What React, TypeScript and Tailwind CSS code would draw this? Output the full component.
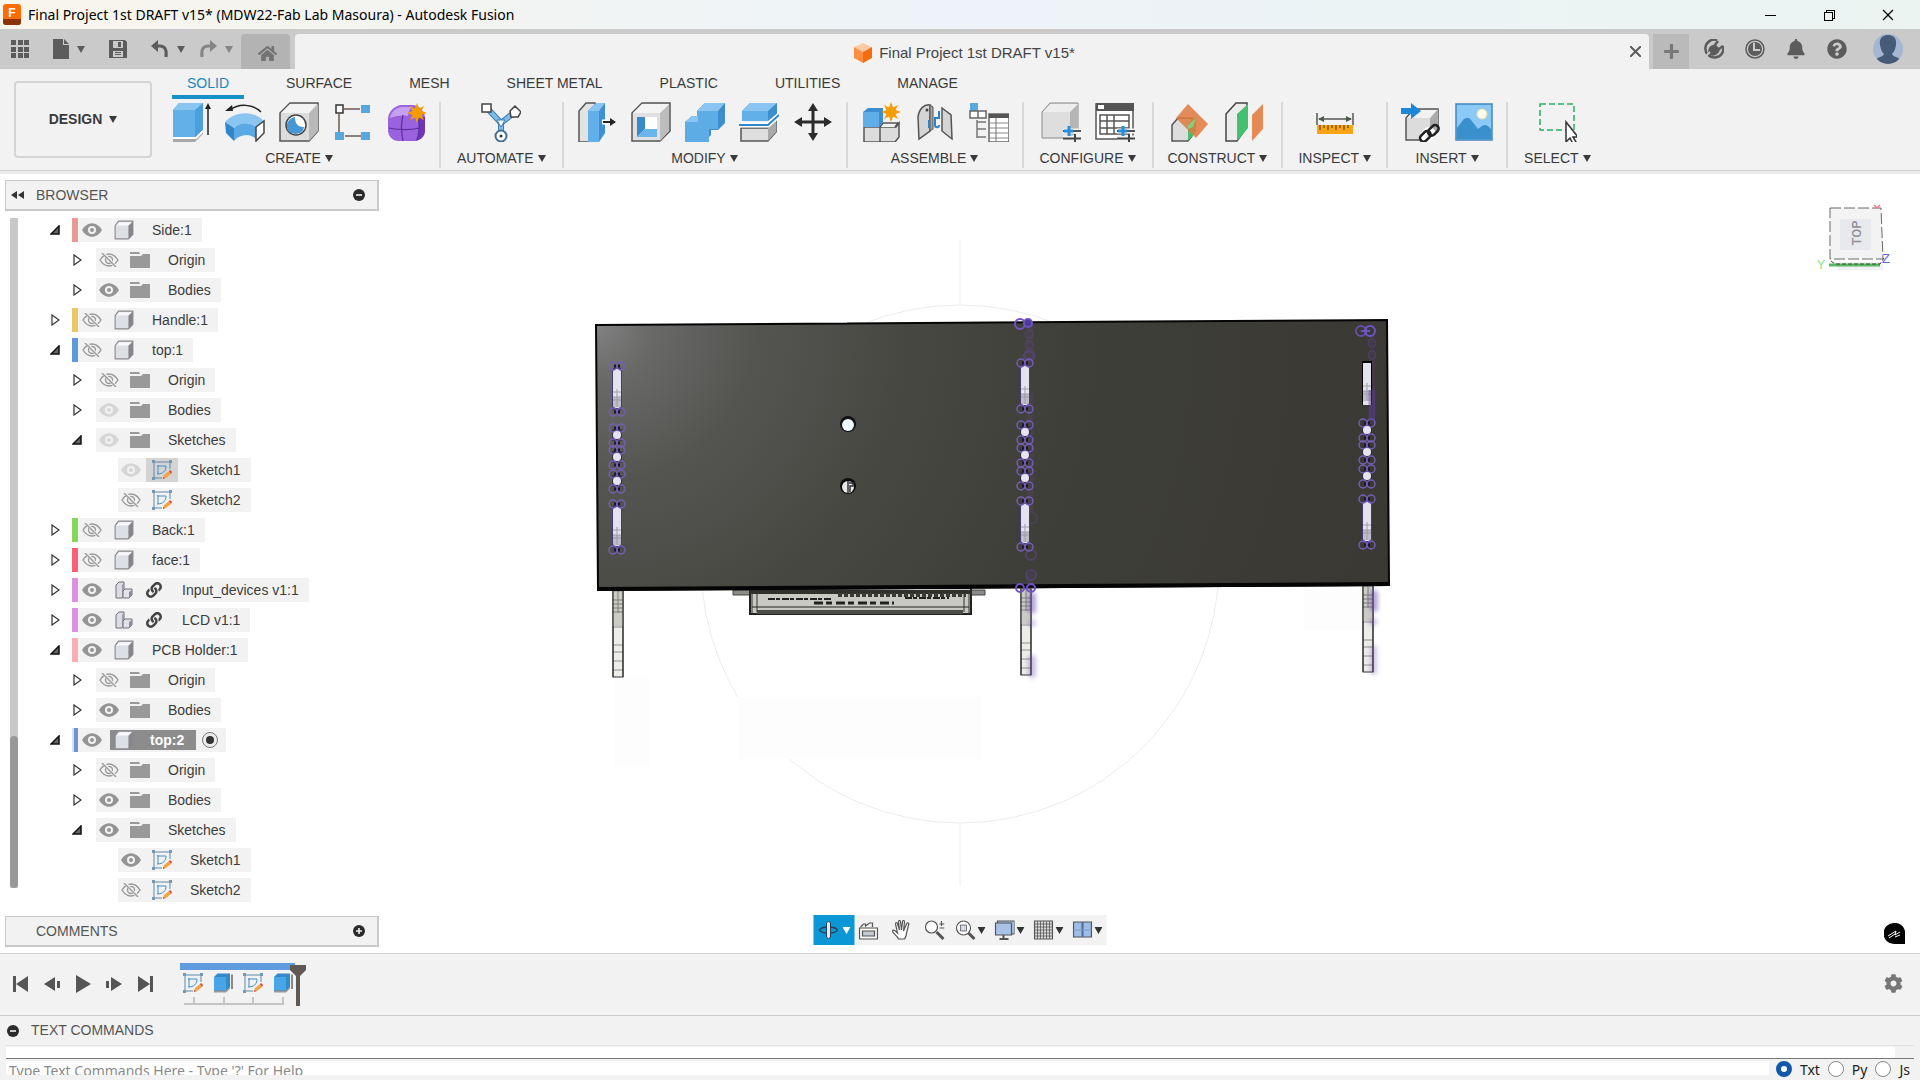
import type { ReactNode } from "react";
import {
  FaBell,
  FaCog,
  FaHome,
  FaLink,
  FaPlus,
  FaQuestionCircle,
} from "react-icons/fa";
import { VscChromeClose, VscChromeMinimize, VscChromeRestore } from "react-icons/vsc";

type IconProps = { className?: string };

const Caret = ({ className = "" }: IconProps) => (
  <svg viewBox="0 0 8 7" className={`h-[7px] w-2 shrink-0 fill-current ${className}`}>
    <path d="M0 0h8L4 7z" />
  </svg>
);

const Svg = ({ children, className = "size-10" }: { children: ReactNode; className?: string }) => (
  <svg viewBox="0 0 40 40" fill="none" className={`shrink-0 ${className}`}>
    {children}
  </svg>
);

/* ---------- ribbon icons ---------- */

const Star = ({ x, y }: { x: number; y: number }) => (
  <path
    transform={`translate(${x} ${y})`}
    fill="#f59c00"
    d="M0-10l2 5.500 5-2.500-2.500 5L10 0 4.500 2 7 7 2 4.500 0 10-2 4.500-7 7-4.500 2-10 0-4.500-2-7-7-2-4.500z"
  />
);

const Extrude = () => (
  <Svg>
    <path d="M2 36l6-6h18l6-6v8l-8 8H2z" fill="#a9a9a9" />
    <path d="M2 8l6-7h24v27l-7 7H2z" fill="#4c9fdd" />
    <path d="M2 8h22v27H2z" fill="#63b0e8" />
    <path d="M2 8l6-7h24l-8 7z" fill="#8ac5f2" />
    <path d="M2 36h23l7-7" stroke="#fff" strokeWidth="2" />
    <path d="M37 33V4" stroke="#222" strokeWidth="1.500" />
    <path d="M34 7l3-6 3 6z" fill="#222" />
  </Svg>
);

const Revolve = () => (
  <Svg>
    <path d="M0 20C10 9 28 8 39 19l-8 6C26 20 15 20 9 26z" fill="#8ac5f2" />
    <path d="M0 20l9 6v13L1 31z" fill="#2f86c9" />
    <path d="M9 26c6-6 16-6 22-1v12c-6-6-16-5-22 2z" fill="#5aa9e4" />
    <path d="M31 25l8-6v12l-8 8z" fill="#fff" stroke="#444" strokeWidth="1.500" />
    <path d="M5 8C14 1 28 2 36 10" stroke="#222" strokeWidth="1.500" />
    <path d="M0 9l7-6 1 6z" fill="#222" />
  </Svg>
);

const Hole = () => (
  <Svg>
    <path d="M1 11L11 1h28v28L30 39H1z" fill="#dcdcdc" stroke="#555" strokeWidth="1.500" />
    <path d="M30 11l9-9v27l-9 10z" fill="#b9b9b9" />
    <path d="M2 11L11 2h27l-8 9z" fill="#f3f3f3" />
    <circle cx="17" cy="23" r="10" fill="#fff" stroke="#444" strokeWidth="1.500" />
    <path d="M16 15c0 8 4 10 9 10-1 9-15 9-17 1-1-6 3-10 8-11z" fill="#4797d6" />
  </Svg>
);

const Pattern = () => (
  <Svg>
    <path d="M11 7h16M6 12v18M12 34h16" stroke="#6e5a50" strokeWidth="1.500" />
    <path d="M3 3h7v8H3z" fill="#fff" stroke="#333" strokeWidth="1.500" />
    <path d="M28 3h9v8h-9zM2 30h9v8H2zM28 30h9v8h-9z" fill="#58a8e0" />
  </Svg>
);

const Form = () => (
  <Svg>
    <path d="M1 17C1 10 7 4 14 3h12c7 1 12 7 12 13v12c0 7-5 11-11 11H12C5 39 1 34 1 28z" fill="#9a63dd" />
    <path d="M32 15h6v13c0 7-5 10-10 11 4-4 4-8 4-11z" fill="#6d36b4" />
    <path d="M3 16C4 10 9 5 15 5h10c-3 3-4 6-4 9-6-1-13 0-18 2z" fill="#c6a1f2" />
    <path d="M16 13c-2 8-2 17 0 26M2 26c9 2 22 2 31 0M31 15c2 7 1 16-1 23" stroke="#5d2d9d" strokeWidth="1.200" />
    <Star x={30} y={11} />
  </Svg>
);

const Automate = () => (
  <Svg>
    <path d="M6 6l14 15v12M34 10L20 21" stroke="#3e7fae" strokeWidth="6" strokeLinecap="round" />
    <path d="M6 6l14 15v12M34 10L20 21" stroke="#7dbbe8" strokeWidth="4" strokeLinecap="round" />
    <path d="M16 18l4 7 4-7z" fill="#fff" stroke="#3e7fae" />
    <path d="M1 2h9v8H1zM29 9l5-5 6 6-3 5h-7z" fill="#fff" stroke="#444" strokeWidth="1.500" />
    <circle cx="20" cy="34" r="5.500" fill="#fff" stroke="#3e6f96" strokeWidth="2" />
    <circle cx="20" cy="34" r="1.500" fill="#333" />
  </Svg>
);

const PressPull = () => (
  <Svg>
    <path d="M2 9l7-8h9v9l-6 30H2z" fill="#e2e2e2" stroke="#555" strokeWidth="1.500" />
    <path d="M11 9l8-8h9v30l-6 9H11z" fill="#3f90d2" />
    <path d="M11 9h11v31H11z" fill="#62b0e9" />
    <path d="M11 9l8-8h9l-6 8z" fill="#8ac5f2" />
    <path d="M25 20h10" stroke="#fff" strokeWidth="5" />
    <path d="M26 20h9" stroke="#222" strokeWidth="2" />
    <path d="M33 16l6 4-6 4z" fill="#222" />
  </Svg>
);

const Shell = () => (
  <Svg>
    <path d="M1 11L11 1h28v28L29 39H1z" fill="#e0e0e0" stroke="#555" strokeWidth="1.500" />
    <path d="M29 11l9-9v27l-9 10z" fill="#bdbdbd" />
    <path d="M2 11L11 2h27l-9 9z" fill="#f4f4f4" />
    <path d="M6 15h20v20H6z" fill="#fff" />
    <path d="M6 15h8v12l-8 8z" fill="#3789c9" />
    <path d="M6 35l8-8h12v8z" fill="#6cb5ea" />
  </Svg>
);

const Combine = () => (
  <Svg>
    <path d="M12 9l8-8h20v20l-7 7h-7v5l-7 7H0V20l7-6h5z" fill="#3c8ecf" />
    <path d="M12 9h21v18H24v13H0V19h12z" fill="#5dace6" />
    <path d="M12 9l8-8h20l-7 8zM0 20l7-6h6v6z" fill="#8ac5f2" />
  </Svg>
);

const SplitBody = () => (
  <Svg>
    <path d="M2 26h27l8-8v12l-8 9H2z" fill="#dedede" stroke="#555" strokeWidth="1.500" />
    <path d="M29 26l8-8v12l-8 9z" fill="#aaa" />
    <path d="M3 9l8-8h27v11l-9 7H3z" fill="#3c8ecf" />
    <path d="M3 9h26v10H3z" fill="#62b0e9" />
    <path d="M3 9l8-8h27l-9 8z" fill="#8ac5f2" />
    <path d="M0 23h29L40 13" stroke="#fff" strokeWidth="5" />
    <path d="M0 23h29L40 13" stroke="#2f86c9" strokeWidth="2" />
  </Svg>
);

const Move = () => (
  <Svg>
    <path d="M20 6v28M6 20h28" stroke="#2b2b2b" strokeWidth="3" />
    <path d="M20 1l5 8H15zM20 39l5-8H15zM1 20l8-5v10zM39 20l-8-5v10z" fill="#2b2b2b" />
  </Svg>
);

const NewComponent = () => (
  <Svg>
    <path d="M3 25h32l3-4v14l-4 5H3z" fill="#dcdcdc" stroke="#555" strokeWidth="1.500" />
    <path d="M19 25v15M19 25l3-4h15l-3 4" stroke="#555" strokeWidth="1.500" fill="#f2f2f2" />
    <path d="M2 10l5-4h15v14l-4 5H2z" fill="#3c8ecf" />
    <path d="M2 10h16v15H2z" fill="#60aee8" />
    <Star x={30} y={10} />
  </Svg>
);

const Joint = () => (
  <Svg>
    <path d="M3 15C4 7 9 2 15 3v26L4 37z" fill="#d5d5d5" stroke="#555" strokeWidth="1.500" />
    <path d="M15 3l3 2v22l-3 2z" fill="#a5a5a5" stroke="#555" />
    <path d="M27 6l9 7 1 24-10-8z" fill="#d5d5d5" stroke="#555" strokeWidth="1.500" />
    <path d="M14 18v8M24 9v8M24 16h-4v7c0 3 4 3 4 0" stroke="#2c83c5" strokeWidth="2" />
    <circle cx="12" cy="8" r="1.500" fill="#444" />
  </Svg>
);

const AsBuilt = () => (
  <Svg>
    <path d="M1 1h8v8H1z" fill="#58a8e0" />
    <path d="M1 9h8v7H1zM9 9h8v7H9z" fill="#fff" stroke="#666" strokeWidth="1.500" />
    <path d="M8 18v18M8 20h9M8 27h9M8 35h9" stroke="#777" strokeWidth="1.500" />
    <path d="M20 12h20v28H20z" fill="#fff" stroke="#666" strokeWidth="1.500" />
    <path d="M20 12h20v4H20z" fill="#555" />
    <path d="M20 21h20M20 26h20M20 31h20M20 36h20M27 16v24" stroke="#888" strokeWidth="1.200" />
  </Svg>
);

const Sliders = () => (
  <>
    <path d="M22 29h18M22 36h18" stroke="#f2f2f2" strokeWidth="5" />
    <path d="M22 29h18" stroke="#222" strokeWidth="1.500" />
    <path d="M22 36.500h18M34 32v9" stroke="#444" strokeWidth="2" />
    <path d="M23 29h9M28 24v10" stroke="#2a8fda" strokeWidth="3" />
  </>
);

const Configure = () => (
  <Svg>
    <path d="M1 10l8-9h28v26l-8 9H1z" fill="#dedede" stroke="#888" />
    <path d="M29 10l8-9v26l-8 9z" fill="#b5b5b5" />
    <path d="M2 10l8-8h27l-8 8z" fill="#ededed" />
    <Sliders />
  </Svg>
);

const ConfigTable = () => (
  <Svg>
    <path d="M1 2h37v35H1z" fill="#fff" stroke="#555" strokeWidth="1.500" />
    <path d="M1 1h38v8H1z" fill="#555" />
    <path d="M3 3h6v4H3z" fill="#fff" />
    <path d="M5 13h29v19H5zM5 19h29M5 26h29M12 13v19M19 13v19" stroke="#555" strokeWidth="1.500" />
    <Sliders />
  </Svg>
);

const OffsetPlane = () => (
  <Svg>
    <path d="M2 23l6-7h14v18l-4 5H2z" fill="#ddd" stroke="#555" strokeWidth="1.500" />
    <path d="M18 22l8-8v16l-8 9z" fill="#45c070" />
    <path d="M18 2l20 20-12 14L6 16z" fill="#e07a3e" opacity=".85" />
    <path d="M18 23l8-7-3 9-5 2z" fill="#8ecb78" />
  </Svg>
);

const Midplane = () => (
  <Svg>
    <path d="M2 12L12 1h11v24L13 39H2z" fill="#ececec" stroke="#444" strokeWidth="1.500" />
    <path d="M13 12L24 2v24L13 39z" fill="#45c070" />
    <path d="M28 13L39 2v25L28 39z" fill="#e58955" />
  </Svg>
);

const Measure = () => (
  <Svg>
    <path d="M2 11v12M38 11v12M4 17h32" stroke="#555" strokeWidth="1.500" />
    <path d="M3 17l6-3v6zM37 17l-6-3v6z" fill="#4c5a4c" />
    <path d="M2 23h36v9H2z" fill="#f7a516" />
    <path d="M5 23v5M9 23v3M13 23v5M17 23v3M21 23v5M25 23v3M29 23v5M33 23v3" stroke="#6b4a10" strokeWidth="1.200" />
  </Svg>
);

const InsertLink = () => (
  <Svg>
    <path d="M6 16l8-9h24v22l-8 9H6z" fill="#dcdcdc" stroke="#555" strokeWidth="1.500" />
    <path d="M30 16l8-9v22l-8 9z" fill="#ababab" />
    <path d="M7 16l8-8h22l-7 8z" fill="#f2f2f2" />
    <path d="M1 6h10V1l10 8-10 8v-5H1z" fill="#1e86d8" />
    <g stroke="#fff" strokeWidth="6">
      <rect x="22" y="30" width="11" height="7" rx="3.500" transform="rotate(-45 27 33)" />
    </g>
    <g stroke="#222" strokeWidth="2.600">
      <rect x="19" y="31" width="12" height="7" rx="3.500" transform="rotate(-45 25 34)" />
      <rect x="27" y="25" width="12" height="7" rx="3.500" transform="rotate(-45 33 28)" />
    </g>
  </Svg>
);

const InsertImage = () => (
  <Svg>
    <path d="M2 2h36v36H2z" fill="#8bcaf7" stroke="#3f86bd" strokeWidth="1.500" />
    <path d="M3 26l6-8c3-3 6-3 8 0l7 9 4-3c3-2 5-1 7 1l2 2v10H3z" fill="#3a8fcd" />
    <circle cx="28" cy="12" r="5" fill="#fffbe6" stroke="#e8e2a8" />
  </Svg>
);

const Select = () => (
  <Svg>
    <path d="M3 2h34v26H3z" stroke="#2bae66" strokeWidth="1.500" strokeDasharray="6 3" />
    <path d="M29 20v20l4-4 3 6 3-2-3-5h5z" fill="#fff" stroke="#333" strokeWidth="1.500" />
  </Svg>
);

const ribbonGroups = [
  { label: "CREATE", pad: "px-3", icons: [Extrude, Revolve, Hole, Pattern, Form] },
  { label: "AUTOMATE", pad: "px-4", icons: [Automate] },
  { label: "MODIFY", pad: "px-[13px]", icons: [PressPull, Shell, Combine, SplitBody, Move] },
  { label: "ASSEMBLE", pad: "px-[13px]", icons: [NewComponent, Joint, AsBuilt] },
  { label: "CONFIGURE", pad: "px-4", icons: [Configure, ConfigTable] },
  { label: "CONSTRUCT", pad: "px-[14px]", icons: [OffsetPlane, Midplane] },
  { label: "INSPECT", pad: "px-[15px]", icons: [Measure] },
  { label: "INSERT", pad: "px-3", icons: [InsertLink, InsertImage] },
  { label: "SELECT", pad: "px-4", icons: [Select] },
];

const workspaceTabs = ["SOLID", "SURFACE", "MESH", "SHEET METAL", "PLASTIC", "UTILITIES", "MANAGE"];

/* ---------- top bars ---------- */

const TitleBar = () => (
  <header className="flex h-[29px] shrink-0 items-center bg-linear-to-r from-[#f8f5ec] via-[#edf3f8] to-[#ebf4f1] pr-[3px] pl-[3px] text-black">
    <svg viewBox="0 0 18 21" className="h-[21px] w-[18px]">
      <rect width="18" height="21" rx="3" fill="#ff6b00" />
      <path d="M0 15h18v3a3 3 0 0 1-3 3H3a3 3 0 0 1-3-3z" fill="#8a3208" />
      <text x="9" y="13" textAnchor="middle" fontSize="12" fontWeight="700" fill="#fff" fontFamily="Liberation Sans, sans-serif">
        F
      </text>
    </svg>
    <h1 className="ml-[7px] flex-1 font-['Noto_Sans',sans-serif] text-[14px] leading-5">
      Final Project 1st DRAFT v15* (MDW22-Fab Lab Masoura) - Autodesk Fusion
    </h1>
    <div className="flex">
      {[VscChromeMinimize, VscChromeRestore, VscChromeClose].map((Icon, i) => (
        <button key={i} aria-label={["Minimize", "Restore", "Close"][i]} className="flex w-[59px] justify-center">
          <Icon size={16} />
        </button>
      ))}
    </div>
  </header>
);

const QuickAccess = () => (
  <div className="flex h-10 shrink-0 items-end bg-[#cacaca] text-[#5c5c5c]">
    <div className="flex h-[35px] w-[241px] items-start pt-[5px]">
      <button aria-label="Data panel" className="ml-[11px] pt-px">
        <svg viewBox="0 0 18 18" className="size-[18px] fill-current">
          <path d="M0 0h5v5H0zM7 0h5v5H7zM13 0h5v5h-5zM0 7h5v5H0zM7 7h5v5H7zM13 7h5v5h-5zM0 13h5v5H0zM7 13h5v5H7zM13 13h5v5h-5z" />
        </svg>
      </button>
      <button aria-label="File" className="ml-6 flex items-center gap-2">
        <svg viewBox="0 0 16 20" className="h-5 w-4 fill-current">
          <path d="M0 0h10v6h6v14H0zM11 0l5 5h-5z" />
        </svg>
        <Caret />
      </button>
      <button aria-label="Save" className="ml-6 pt-px">
        <svg viewBox="0 0 18 18" className="size-[18px]">
          <path d="M0 0h16l2 2v16H0z" fill="#5c5c5c" />
          <path d="M4 1h10v7H4zM4 11h10v6H4z" fill="#cacaca" />
          <path d="M9 2h3v5H9zM6 12h6v1H6zM6 14h6v1H6z" fill="#5c5c5c" />
        </svg>
      </button>
      <button aria-label="Undo" className="ml-6 flex items-center gap-2 pt-px">
        <svg viewBox="0 0 18 18" fill="none" className="size-[18px]">
          <path d="M4 6h5c5 0 7 4 6 11" stroke="currentColor" strokeWidth="3" />
          <path d="M0 6l7-6v12z" fill="currentColor" />
        </svg>
        <Caret />
      </button>
      <button aria-label="Redo" className="ml-[14px] flex items-center gap-2 pt-px text-[#858585]">
        <svg viewBox="0 0 18 18" fill="none" className="size-[18px]">
          <path d="M14 6H9C4 6 2 10 3 17" stroke="currentColor" strokeWidth="3" />
          <path d="M18 6l-7-6v12z" fill="currentColor" />
        </svg>
        <Caret />
      </button>
    </div>
    <button aria-label="Home" className="flex h-[35px] w-[49px] items-center justify-center rounded-t bg-[#b3b3b3] pt-1 pl-1 text-[#737373]">
      <FaHome size={19} />
    </button>
    <div className="ml-[5px] flex h-[35px] flex-1 items-center rounded-t bg-[#f2f2f2] pr-2">
      <div className="flex flex-1 items-center justify-center gap-[7px] pt-[2px] pl-1">
        <svg viewBox="0 0 18 20" className="h-5 w-[18px]">
          <path d="M9 0l9 4-9 5-9-5z" fill="#ffc9a3" />
          <path d="M0 4l9 5v11l-9-5z" fill="#ff8d42" />
          <path d="M18 4L9 9v11l9-5z" fill="#f36c0e" />
        </svg>
        <span className="text-[15px] leading-5 text-[#444]">Final Project 1st DRAFT v15*</span>
      </div>
      <button aria-label="Close tab" className="text-[#5c5c5c]">
        <svg viewBox="0 0 11 11" className="size-[11px] stroke-current" strokeWidth="2">
          <path d="M0 0l11 11M11 0L0 11" />
        </svg>
      </button>
    </div>
    <button aria-label="New tab" className="ml-1 flex h-[35px] w-9 items-center justify-center bg-[#bababa] text-[#777]">
      <FaPlus size={17} />
    </button>
    <div className="flex h-[35px] items-start gap-[21px] pt-[5px] pr-[17px] pl-[15px]">
      <button aria-label="Extensions">
        <svg viewBox="0 0 20 20" className="size-5">
          <path d="M13 1a9 9 0 1 0 6 6" fill="none" stroke="#5c5c5c" strokeWidth="2.500" />
          <path d="M5 16c-2-5 0-9 4-10l2-1 5 5-1 3c-2 3-6 5-10 3z" fill="#5c5c5c" />
          <path d="M11 6l3-4M15 10l4-3" stroke="#5c5c5c" strokeWidth="2.500" />
          <path d="M1 18l5-5" stroke="#cacaca" strokeWidth="2" />
        </svg>
      </button>
      <button aria-label="Job status">
        <svg viewBox="0 0 20 20" className="size-5">
          <circle cx="10" cy="10" r="9" fill="none" stroke="#5c5c5c" strokeWidth="1.500" />
          <circle cx="10" cy="10" r="7" fill="#5c5c5c" />
          <path d="M9 4v7h6" fill="none" stroke="#cacaca" strokeWidth="2" />
        </svg>
      </button>
      <button aria-label="Notifications" className="flex w-5 justify-center">
        <FaBell size={20} />
      </button>
      <button aria-label="Help">
        <FaQuestionCircle size={20} />
      </button>
      <button aria-label="Account" className="-mt-[5px] ml-[5px]">
        <svg viewBox="0 0 30 30" className="size-[30px]">
          <clipPath id="avatar">
            <circle cx="15" cy="15" r="15" />
          </clipPath>
          <g clipPath="url(#avatar)">
            <path d="M0 0h30v30H0z" fill="#a4b7d2" />
            <path d="M15 1c6 0 9 4 8 10-1 5-2 7-4 9 1 3 6 3 9 6v4H2v-4c3-3 8-3 9-6-2-2-3-4-4-9C6 5 9 1 15 1z" fill="#455b78" />
          </g>
        </svg>
      </button>
    </div>
  </div>
);

const Ribbon = () => (
  <div className="flex h-[105px] shrink-0 border-b-[3px] border-[#eaeaea] bg-[#f2f2f2] text-[14px] text-[#3a3a3a] shadow-[inset_0_-1px_0_#cfcfcf]">
    <button className="mt-3 ml-[14px] flex h-[77px] w-[138px] items-center justify-center gap-[7px] rounded border-2 border-[#d4d4d4] text-[14px] font-bold">
      DESIGN <Caret />
    </button>
    <div className="ml-[6px] flex flex-col">
      <nav className="flex h-[30px] gap-[27px] pl-[14px]">
        {workspaceTabs.map((tab) => (
          <button
            key={tab}
            className={
              tab === "SOLID"
                ? "border-b-4 border-[#1792c8] px-[15px] pt-[2px] text-[#1b87bb]"
                : "border-b-4 border-transparent px-[15px] pt-[2px]"
            }
          >
            {tab}
          </button>
        ))}
      </nav>
      <div className="flex pt-[3px] pl-px">
        {ribbonGroups.map(({ label, pad, icons }) => (
          <section
            key={label}
            className={`flex flex-col items-center gap-[6px] border-r-2 border-[#d9d9d9] last:border-0 ${pad}`}
          >
            <div className="flex gap-[14px]">
              {icons.map((Icon, i) => (
                <button key={i} aria-label={`${label} ${i + 1}`}>
                  <Icon />
                </button>
              ))}
            </div>
            <button className="flex h-5 items-center gap-1 leading-5">
              {label} <Caret />
            </button>
          </section>
        ))}
      </div>
    </div>
  </div>
);

/* ---------- browser tree ---------- */

type Eye = "on" | "off" | "dim";
type NodeRow = {
  depth: 0 | 1 | 2;
  name: string;
  eye: Eye;
  kind: "body" | "folder" | "sketch" | "assembly";
  open?: boolean;
  color?: string;
  highlight?: boolean;
  active?: boolean;
};

const rows: NodeRow[] = [
  { depth: 0, name: "Side:1", eye: "on", kind: "body", open: true, color: "bg-[#e59b93]" },
  { depth: 1, name: "Origin", eye: "off", kind: "folder" },
  { depth: 1, name: "Bodies", eye: "on", kind: "folder" },
  { depth: 0, name: "Handle:1", eye: "off", kind: "body", color: "bg-[#e8c968]" },
  { depth: 0, name: "top:1", eye: "off", kind: "body", open: true, color: "bg-[#5e9ad9]" },
  { depth: 1, name: "Origin", eye: "off", kind: "folder" },
  { depth: 1, name: "Bodies", eye: "dim", kind: "folder" },
  { depth: 1, name: "Sketches", eye: "dim", kind: "folder", open: true },
  { depth: 2, name: "Sketch1", eye: "dim", kind: "sketch", highlight: true },
  { depth: 2, name: "Sketch2", eye: "off", kind: "sketch" },
  { depth: 0, name: "Back:1", eye: "off", kind: "body", color: "bg-[#85d65f]" },
  { depth: 0, name: "face:1", eye: "off", kind: "body", color: "bg-[#fb5f78]" },
  { depth: 0, name: "Input_devices v1:1", eye: "on", kind: "assembly", color: "bg-[#de90e0]" },
  { depth: 0, name: "LCD v1:1", eye: "on", kind: "assembly", color: "bg-[#de90e0]" },
  { depth: 0, name: "PCB Holder:1", eye: "on", kind: "body", open: true, color: "bg-[#f9aeb4]" },
  { depth: 1, name: "Origin", eye: "off", kind: "folder" },
  { depth: 1, name: "Bodies", eye: "on", kind: "folder" },
  { depth: 0, name: "top:2", eye: "on", kind: "body", open: true, color: "bg-[#6f95cf]", active: true },
  { depth: 1, name: "Origin", eye: "off", kind: "folder" },
  { depth: 1, name: "Bodies", eye: "on", kind: "folder" },
  { depth: 1, name: "Sketches", eye: "on", kind: "folder", open: true },
  { depth: 2, name: "Sketch1", eye: "on", kind: "sketch" },
  { depth: 2, name: "Sketch2", eye: "off", kind: "sketch" },
];

const indent = ["pl-[26px]", "pl-[48px]", "pl-[100px]"];

const EyeIcon = ({ state }: { state: Eye }) => {
  const color = state === "dim" ? "#d6d6d6" : "#949494";
  return (
    <svg viewBox="0 0 20 14" fill="none" className="h-[14px] w-5">
      {state === "off" ? (
        <g stroke="#999" strokeWidth="1.400">
          <path d="M1 7c5-8 13-8 18 0-5 8-13 8-18 0z" />
          <circle cx="10" cy="7" r="3.500" />
          <path d="M4 0l13 14" stroke="#f2f2f2" strokeWidth="3" />
          <path d="M3 0l14 14" />
        </g>
      ) : (
        <>
          <path d="M0 7c5-9 15-9 20 0-5 9-15 9-20 0z" fill={color} />
          <circle cx="10" cy="7" r="4" fill="#f2f2f2" />
          <circle cx="10" cy="7" r="2" fill={color} />
        </>
      )}
    </svg>
  );
};

const BodyIcon = () => (
  <svg viewBox="0 0 18 18" className="size-5">
    <path d="M1 5l3-4h13v12l-4 4H1z" fill="#dcdfe4" stroke="#8a8a8e" strokeLinejoin="round" />
    <path d="M13 5l4-4v12l-4 4z" fill="#85858a" />
    <path d="M2 5l3-3h11l-3 3z" fill="#f8f8fa" />
  </svg>
);

const AssemblyIcon = () => (
  <svg viewBox="0 0 18 18" className="size-[18px]" strokeLinejoin="round">
    <path d="M1 4l3-3h5v14l-2 2H1z" fill="#dcdce4" stroke="#707074" />
    <path d="M7 4l2-2v13l-2 2z" fill="#9a9aa2" />
    <path d="M8 10l2-2h7v6l-3 3H8z" fill="#e2e2ea" stroke="#707074" />
    <path d="M14 11l3-2v5l-3 3z" fill="#8c8c94" />
  </svg>
);

const FolderIcon = () => (
  <svg viewBox="0 0 20 16" className="h-4 w-5">
    <path d="M0 0h9l1 2H0zM0 4h11l2-2h7v14H0z" fill="#999" />
  </svg>
);

const SketchIcon = () => (
  <svg viewBox="0 0 20 20" className="size-5" fill="none">
    <path d="M2 1v18M1 2h18M1 18h9M18 1v8" stroke="#5f87a8" />
    <path d="M5 6h9M6 5v9M14 6c0 5-3 8-9 8" stroke="#3f8fce" />
    <path d="M0 0h3v3H0zM17 0h3v3h-3zM0 17h3v3H0z" fill="#7898b0" />
    <path d="M11 19l1-4 5-4 2 3-5 4z" fill="#f2a548" />
    <path d="M17 11l1-1 2 2-1 2zM11 19v-2l2 1z" fill="#d8403a" />
  </svg>
);

const kindIcon = { body: BodyIcon, assembly: AssemblyIcon, folder: FolderIcon, sketch: SketchIcon };

const TreeRow = ({ depth, name, eye, kind, open, color, highlight, active }: NodeRow) => {
  const Icon = kindIcon[kind];
  return (
    <li className={`flex h-6 items-center ${indent[depth]}`}>
      {depth < 2 && (
        <button
          aria-label={open ? "Collapse" : "Expand"}
          className={`flex w-[22px] shrink-0 justify-center ${depth === 0 ? "mr-[6px]" : "mr-2"}`}
        >
          {open ? (
            <svg viewBox="0 0 10 10" className="size-[10px]">
              <path d="M9 1v8H1z" fill="#666" stroke="#111" strokeWidth="1.500" />
            </svg>
          ) : (
            <svg viewBox="0 0 9 12" className="h-3 w-[9px]">
              <path d="M1 1l7 5-7 5z" fill="#fff" stroke="#333" strokeWidth="1.200" />
            </svg>
          )}
        </button>
      )}
      <div className="flex h-6 items-center bg-[#f2f2f2]">
        {color && <span className={`h-6 w-[6px] ${color} ${active ? "border-l-2 border-[#cfe2f7]" : ""}`} />}
        <button aria-label="Toggle visibility" className={`flex justify-center ${depth === 0 ? "w-7" : "w-[26px]"}`}>
          <EyeIcon state={eye} />
        </button>
        <span className={`flex items-center ${active ? "ml-1 h-5 bg-[#8c8c8c] pr-3 font-bold text-white" : "ml-[2px] h-full pr-[10px]"}`}>
          <span
            className={`flex h-full items-center justify-center ${active ? "w-7" : "w-8"} ${highlight ? "bg-[#d4d4d4]" : ""}`}
          >
            <Icon />
          </span>
          {kind === "assembly" && <FaLink size={16} className="mr-2 ml-[6px] text-[#444]" />}
          <span className="ml-3">{name}</span>
        </span>
        {active && (
          <label className="mr-2 ml-[6px] flex">
            <input type="radio" defaultChecked aria-label="Activate component" className="peer sr-only" />
            <span className="flex size-4 items-center justify-center rounded-full border border-[#777] bg-[#ececec]">
              <span className="size-2 rounded-full bg-[#333]" />
            </span>
          </label>
        )}
      </div>
    </li>
  );
};

const RoundSign = ({ plus }: { plus?: boolean }) => (
  <svg viewBox="0 0 12 12" className="size-3 shrink-0">
    <circle cx="6" cy="6" r="6" fill="#2b2b2b" />
    <path d={plus ? "M3 6h6M6 3v6" : "M3 6h6"} stroke="#f2f2f2" strokeWidth="1.600" />
  </svg>
);

const Browser = () => (
  <aside className="absolute top-[6px] bottom-[6px] left-[5px] flex w-[374px] flex-col text-[14px] text-[#3c3c3c]">
    <div className="flex h-[31px] shrink-0 items-center border border-r-2 border-b-2 border-[#c9c9c9] bg-[#f2f2f2] pr-3 pl-[5px]">
      <button aria-label="Collapse browser">
        <svg viewBox="0 0 13 8" className="h-2 w-[13px] fill-[#333]">
          <path d="M6 0v8L0 4zM13 0v8L7 4z" />
        </svg>
      </button>
      <h2 className="ml-3 flex-1 text-[#555]">BROWSER</h2>
      <button aria-label="Minimize browser">
        <RoundSign />
      </button>
    </div>
    <div className="mt-[7px] flex flex-1">
      <div className="ml-[5px] flex h-[670px] w-2 flex-col justify-end bg-[#c8c8c8]">
        <div className="h-[152px] rounded-full bg-[#989898]" />
      </div>
      <ul className="flex flex-col gap-[6px]">
        {rows.map((row, i) => (
          <TreeRow key={i} {...row} />
        ))}
      </ul>
    </div>
    <div className="flex h-[31px] shrink-0 items-center border border-r-2 border-b-2 border-[#c9c9c9] bg-[#f2f2f2] pr-3 pl-[30px]">
      <h2 className="flex-1 text-[#555]">COMMENTS</h2>
      <button aria-label="Expand comments">
        <RoundSign plus />
      </button>
    </div>
  </aside>
);

/* ---------- model view ---------- */

const Rings = ({ x, y, r = 4 }: { x: number; y: number; r?: number }) => (
  <g fill="none" stroke="#7560b4" strokeWidth="1.400">
    <path d={`M${x - 3} ${y}h6`} stroke="#1c1630" strokeWidth="3" />
    <circle cx={x - 4} cy={y} r={r} />
    <circle cx={x + 4} cy={y} r={r} />
  </g>
);

const Slot = ({ x, y, plain }: { x: number; y: number; plain?: boolean }) => (
  <g>
    <rect x={x - 5} y={y - 22} width="10" height="44" rx={plain ? 0 : 4} fill={plain ? "#000" : "#453b70"} />
    <rect x={x - 4} y={y - 20} width="8" height={plain ? 42 : 39} rx={plain ? 0 : 3} fill="#e4e2ee" />
    <path d={`M${x - 4} ${y + 3}h8M${x - 4} ${y + 8}h8M${x - 4} ${y + 11}h8M${x} ${y}v18`} stroke="#85838f" opacity=".7" />
    <path d={`M${x - 4} ${y + 8}h8v10h-8z`} fill="#9b98a8" opacity=".5" />
    {!plain && (
      <>
        <Rings x={x} y={y - 23} />
        <Rings x={x} y={y + 23} />
      </>
    )}
  </g>
);

const PinHole = ({ x, y }: { x: number; y: number }) => (
  <g>
    <rect x={x - 5} y={y - 6} width="10" height="12" fill="#2f2b40" opacity=".7" />
    <Rings x={x} y={y - 7} />
    <Rings x={x} y={y + 8} />
    <circle cx={x} cy={y} r="4" fill="#e6e4f0" />
  </g>
);

const Leg = ({ x, y }: { x: number; y: number }) => (
  <g stroke="#333">
    <rect x={x - 5} y={y} width="10" height="86" fill="#ededea" />
    <rect x={x - 5} y={y} width="10" height="35" fill="#bdbdb8" stroke="none" opacity=".7" />
    <path
      d={`M${x - 5} ${y + 9}h10M${x - 5} ${y + 13}h10M${x - 5} ${y + 17}h10M${x - 5} ${y + 21}h10M${x - 5} ${y + 36}h10M${x - 5} ${y + 54}h10M${x - 5} ${y + 61}h10M${x - 5} ${y + 70}h10M${x - 5} ${y + 79}h10M${x} ${y}v22`}
      opacity=".5"
    />
    <path d={`M${x - 5} ${y}v86M${x + 5} ${y}v86`} stroke="#222" />
  </g>
);

const columns = [
  { x: 617, top: 389, pins: [435, 457, 481], bottom: 527 },
  { x: 1025, top: 386, pins: [432, 455, 478], bottom: 524 },
  { x: 1367, top: 383, pins: [430, 452, 476], bottom: 522 },
];

const Model = () => (
  <svg viewBox="0 174 1920 779" className="absolute inset-0 size-full">
    <defs>
      <radialGradient id="plate" gradientUnits="userSpaceOnUse" cx="596" cy="325" r="800">
        <stop offset="0" stopColor="#828282" />
        <stop offset=".07" stopColor="#696968" />
        <stop offset=".2" stopColor="#545451" />
        <stop offset=".38" stopColor="#484843" />
        <stop offset=".6" stopColor="#3f3f39" />
        <stop offset="1" stopColor="#3a3933" />
      </radialGradient>
      <filter id="soft" x="-100%" width="300%">
        <feGaussianBlur stdDeviation="2" />
      </filter>
    </defs>

    <g fill="none" stroke="#ecece9">
      <circle cx="960" cy="564" r="259" />
      <path d="M960 241v64M960 823v63" />
    </g>
    <path d="M737 697h246v62H737zM614 677h35v90h-35zM1304 590h58v40h-58z" fill="#fdfdfd" />

    {/* boards standing under the plate */}
    <Leg x={618} y={591} />
    <Leg x={1026} y={589} />
    <Leg x={1368} y={586} />
    <g fill="#6b4cae" opacity=".5" filter="url(#soft)">
      <rect x="1028" y="592" width="8" height="22" rx="4" />
      <rect x="1370" y="590" width="8" height="22" rx="4" />
      <circle cx="1032" cy="623" r="4" opacity=".6" />
      <rect x="1028" y="655" width="8" height="23" rx="4" opacity=".7" />
      <circle cx="1373" cy="622" r="4" opacity=".7" />
      <rect x="1370" y="645" width="7" height="30" rx="4" opacity=".6" />
    </g>

    {/* LCD module */}
    <path d="M733 590h252v5H733z" fill="#8b8b88" stroke="#444" />
    <path d="M750 588h221v26H750z" fill="#c8c9c2" stroke="#222" strokeWidth="2" />
    <path d="M750 590h221v4H750z" fill="#30302c" />
    <path d="M838 595h128" stroke="#3a3a34" strokeWidth="4" strokeDasharray="4 2" />
    <path d="M768 599h64M905 598h44" stroke="#222" strokeWidth="2" strokeDasharray="7 1 4 2" />
    <path d="M814 603h80" stroke="#222" strokeWidth="3" strokeDasharray="9 3 6 4" />
    <path d="M752 607h217" stroke="#222" />
    <path d="M757 612h206" stroke="#4c4d48" strokeWidth="4" />
    <path d="M752 590v24M969 590v24M757 594v18M964 594v18" stroke="#333" />

    {/* plate */}
    <path d="M596 325l791-5 2 265-791 5z" fill="url(#plate)" stroke="#050505" strokeWidth="2" />
    <path d="M597 589l792-5" stroke="#050505" strokeWidth="4" />

    <circle cx="848" cy="424" r="8" fill="#0c1416" />
    <circle cx="848" cy="425" r="6" fill="#f0fbff" />
    <circle cx="848" cy="486" r="8" fill="#0c0c0c" />
    <circle cx="848" cy="487" r="6" fill="#e8e8e8" />
    <path d="M848 481v12M849 483h4v3h-3v6" stroke="#333" fill="none" strokeWidth="1.500" />

    {/* sketch trail */}
    <g stroke="#65469a" fill="none" opacity=".5">
      <path d="M1030 324v270" strokeWidth="7" strokeDasharray="38 30 120 60 20" opacity=".35" />
      <path d="M1372 335v90" strokeWidth="6" opacity=".4" />
      <circle cx="1029" cy="334" r="4" />
      <circle cx="1029" cy="345" r="4" />
      <circle cx="1029" cy="356" r="5" strokeWidth="3" />
      <circle cx="1031" cy="518" r="6" />
      <circle cx="1031" cy="555" r="5" strokeWidth="2" />
      <circle cx="1031" cy="575" r="5" strokeWidth="2" />
      <circle cx="1372" cy="343" r="4" />
      <circle cx="1372" cy="355" r="4" />
    </g>

    {columns.map(({ x, top, pins, bottom }, i) => (
      <g key={x}>
        <Slot x={x} y={top} plain={i === 2} />
        {pins.map((y) => (
          <PinHole key={y} x={x} y={y} />
        ))}
        <Slot x={x} y={bottom} />
      </g>
    ))}
    <path d="M1372 390v30" stroke="#5a3c96" strokeWidth="7" opacity=".45" />

    <g fill="none" stroke="#6f52c4" strokeWidth="2">
      <circle cx="1020" cy="324" r="5" />
      <circle cx="1028" cy="323" r="4" fill="#4f3a90" />
      <circle cx="1361" cy="331" r="5" opacity=".8" />
      <circle cx="1370" cy="331" r="5" />
      <path d="M1361 331h9M1366 327v8" />
      <circle cx="1020" cy="588" r="4" />
      <circle cx="1031" cy="588" r="4" />
    </g>
  </svg>
);

const ViewCube = () => (
  <svg viewBox="1816 198 84 80" className="absolute top-6 right-5 h-20 w-[84px]" fontFamily="Liberation Sans, sans-serif">
    <path d="M1834 262h48l2 8h-46z" fill="#e9e4ee" opacity=".6" />
    <path d="M1830 208h51l2 51h-53z" fill="#f3f3f4" stroke="#444" strokeWidth=".8" strokeDasharray="11 3" />
    <path d="M1840 219h31v31h-31z" fill="#e8e9ed" />
    <path d="M1829 265h51" stroke="#55bb60" strokeWidth="3" />
    <path d="M1831 261l4 3h45l4-6" fill="none" stroke="#444" strokeDasharray="4 2" />
    <text x="0" y="5" transform="translate(1856 233) rotate(-90)" textAnchor="middle" fontSize="13" fontWeight="500" fill="#8f8f95" fontFamily="Roboto, sans-serif">
      TOP
    </text>
    <text x="1817" y="269" fontSize="12" fill="#7de87d">Y</text>
    <text x="1882" y="263" fontSize="13" fill="#6464e8">Z</text>
    <path d="M1874 205l3 3 3-3" stroke="#f0788c" fill="none" strokeWidth="1.500" />
  </svg>
);

const navTools: { name: string; caret: boolean; art: ReactNode }[] = [
  {
    name: "Look at",
    caret: false,
    art: (
      <>
        <path d="M1 8h18v11H1z" fill="#f8f8f8" />
        <path d="M4 11h12v5H4z" fill="#c4ccd6" />
        <path d="M2 7l3-3h2v2l4-3h3v4" />
      </>
    ),
  },
  {
    name: "Pan",
    caret: false,
    art: <path fill="#fff" d="M7 19c-1-3-6-6-6-8 1-2 3 0 5 2L4 4c0-2 2-2 2 0l2 6-1-8c0-2 2-2 2 0l1 8 1-8c0-2 2-2 2 0l-1 9 3-7c1-2 3-1 2 1l-2 8c0 3-1 4-2 6z" />,
  },
  {
    name: "Zoom",
    caret: false,
    art: (
      <>
        <circle cx="7" cy="7" r="6" fill="#fff" />
        <path d="M12 12l7 7" strokeWidth="3" />
        <path d="M15 4h5M17 1v5M15 8h5" />
      </>
    ),
  },
  {
    name: "Fit",
    caret: true,
    art: (
      <>
        <circle cx="8" cy="8" r="7" fill="#fff" />
        <path d="M5 5h6v6H5z" fill="#d5dbe4" strokeWidth=".8" />
        <path d="M13 13l6 6" strokeWidth="3" />
      </>
    ),
  },
  {
    name: "Display",
    caret: true,
    art: (
      <>
        <path d="M3 1h17v13H3z" fill="#a9c3e8" />
        <path d="M1 3h16v12H1z" fill="#a9c3e8" />
        <path d="M9 15v4M5 19h9" strokeWidth="2" />
      </>
    ),
  },
  {
    name: "Grid",
    caret: true,
    art: (
      <>
        <path d="M1 1h18v18H1z" fill="#dcdcdc" />
        <path d="M4 1v18M7 1v18M10 1v18M13 1v18M16 1v18M1 4h18M1 7h18M1 10h18M1 13h18M1 16h18" strokeWidth=".8" />
      </>
    ),
  },
  {
    name: "Viewports",
    caret: true,
    art: (
      <>
        <path d="M1 2h18v15H1z" fill="#9dbce6" />
        <path d="M10 2v15" stroke="#4f6b94" strokeWidth="2" />
        <path d="M1 10h18" stroke="#7f9cc6" />
      </>
    ),
  },
];

const NavBar = () => (
  <div className="absolute bottom-2 left-1/2 flex h-[30px] -translate-x-1/2 items-center bg-[#f2f2f2] pr-1 text-[#333]">
    <button aria-label="Orbit" className="mr-[2px] flex h-[30px] w-[41px] items-center justify-center gap-1 bg-[#0b97d6]">
      <svg viewBox="0 0 20 20" fill="none" className="size-5" stroke="#24435a">
        <path d="M1 10c2-4 16-4 18 0-2 4-16 4-18 0z" strokeWidth="1.500" />
        <path d="M8 3l2-2 2 2v14l-2 2-2-2z" fill="#e9e9e9" />
      </svg>
      <Caret className="text-white" />
    </button>
    <div className="flex gap-[9px]">
      {navTools.map(({ name, caret, art }) => (
        <button key={name} aria-label={name} className={caret ? "flex items-center gap-[2px]" : "px-[2px]"}>
          <svg viewBox="0 0 20 20" fill="none" stroke="#555" strokeWidth="1.200" className="size-5">
            {art}
          </svg>
          {caret && <Caret />}
        </button>
      ))}
    </div>
  </div>
);

const Viewport = () => (
  <main className="relative min-h-0 flex-1 bg-white">
    <Model />
    <Browser />
    <ViewCube />
    <NavBar />
    <button aria-label="Assistant" className="absolute right-[15px] bottom-[9px]">
      <svg viewBox="0 0 21 21" className="size-[21px]">
        <path d="M10 0a10 10 0 0 1 11 11v10H10A10 10 0 0 1 10 0z" />
        <path d="M4 13l8-5-1 4 5-3M5 15l6-4M11 14l5-2" stroke="#fff" fill="none" />
      </svg>
    </button>
  </main>
);

/* ---------- timeline and command line ---------- */

const playback = [
  { name: "Go to start", d: "M0 2h3v16H0zM15 2v16L3 10z" },
  { name: "Step back", d: "M11 3v14L0 10zM13 7h3v7h-3z" },
  { name: "Play", d: "M1 1v18l15-9z" },
  { name: "Step forward", d: "M5 3v14l11-7zM0 7h3v7H0z" },
  { name: "Go to end", d: "M13 2h3v16h-3zM1 2v16l12-8z" },
];

const Timeline = () => (
  <div className="flex h-[62px] shrink-0 items-start border-t border-[#d0d0d0] bg-[#f2f2f2]">
    <div className="flex gap-[15px] pt-5 pl-[13px]">
      {playback.map(({ name, d }) => (
        <button key={name} aria-label={name}>
          <svg viewBox="0 0 16 20" className="h-5 w-4 fill-[#555]">
            <path d={d} />
          </svg>
        </button>
      ))}
    </div>
    <div className="ml-[27px] flex pt-[9px]">
      <div className="w-[115px]">
        <div className="h-[7px] bg-[#5f9bdf]" />
        <div className="flex gap-[10px] pt-[3px] pl-[3px]">
          {[0, 1, 2, 3].map((i) => (
            <button key={i} aria-label={`Feature ${i + 1}`}>
              {i % 2 ? (
                <Svg className="size-5">
                  <path d="M2 34l6-6h20l6-6v9l-8 8H2z" fill="#999" />
                  <path d="M2 8l7-7h25v26l-8 8H2z" fill="#3489c9" />
                  <path d="M2 8h24v26H2z" fill="#49a6e6" />
                  <path d="M38 32V3" stroke="#222" strokeWidth="2" />
                </Svg>
              ) : (
                <SketchIcon />
              )}
            </button>
          ))}
        </div>
        <div className="mt-1 ml-1 flex h-2 w-[100px] justify-between border-b-2 border-[#c4c4c4] pl-[9px]">
          {[0, 1, 2, 3].map((i) => (
            <span key={i} className="h-[6px] w-[2px] bg-[#c4c4c4]" />
          ))}
        </div>
      </div>
      <svg viewBox="0 0 16 41" className="-ml-[5px] h-[43px] w-4 pt-[2px]">
        <path d="M0 0h16v5l-6 6v30H6V11L0 5z" fill="#5f5853" />
      </svg>
    </div>
    <button aria-label="Timeline settings" className="mt-5 mr-[17px] ml-auto text-[#777]">
      <FaCog size={19} />
    </button>
  </div>
);

const TextCommands = () => (
  <footer className="h-[65px] shrink-0 overflow-hidden border-t border-[#cbcbcb] bg-[#f2f2f2] px-[6px]">
    <div className="flex h-[30px] items-center gap-3 border-b border-[#e2e2e2] pl-px text-[14px] text-[#555]">
      <button aria-label="Collapse text commands">
        <RoundSign />
      </button>
      <h2>TEXT COMMANDS</h2>
    </div>
    <div className="mt-px mr-[19px] h-[11px] bg-white" />
    <div className="flex items-start border-t border-[#777] pt-[2px] font-['Noto_Sans',sans-serif] text-[14px]">
      <div className="flex h-[14px] flex-1 items-start overflow-hidden">
        <input
          aria-label="Text command"
          placeholder="Type Text Commands Here - Type '?' For Help"
          className="h-5 flex-1 bg-white pl-[3px] leading-5 outline-none placeholder:text-[#8a8a8a]"
        />
      </div>
      <div className="flex h-5 gap-2 pr-1 pl-[7px] text-[#222]">
        {["Txt", "Py", "Js"].map((lang) => (
          <label key={lang} className="flex items-start gap-2 leading-[18px]">
            <input
              type="radio"
              name="lang"
              defaultChecked={lang === "Txt"}
              className="size-4 appearance-none rounded-full border border-[#888] bg-white checked:border-[5px] checked:border-[#1059a8]"
            />
            {lang}
          </label>
        ))}
      </div>
    </div>
  </footer>
);

const App = () => (
  <div className="flex h-screen flex-col overflow-hidden bg-[#f2f2f2] font-['Liberation_Sans',Arial,sans-serif]">
    <TitleBar />
    <QuickAccess />
    <Ribbon />
    <Viewport />
    <Timeline />
    <TextCommands />
  </div>
);

export default App;
